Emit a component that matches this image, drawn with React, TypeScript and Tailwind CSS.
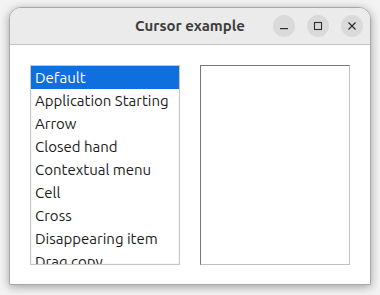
import React from "react";

const items = [
  "Default",
  "Application Starting",
  "Arrow",
  "Closed hand",
  "Contextual menu",
  "Cell",
  "Cross",
  "Disappearing item",
  "Drag copy",
];

function CircleBtn({ children }: { children: React.ReactNode }) {
  return (
    <div className="w-[22px] h-[22px] rounded-full bg-[#dadada] flex items-center justify-center">
      {children}
    </div>
  );
}

export default function App() {
  return (
    <div
      className="w-[380px] h-[295px] bg-[#f3f3f3] pt-[7px] pl-[9px] overflow-hidden"
      style={{ fontFamily: "Ubuntu, 'Noto Sans', sans-serif" }}
    >
      <div className="w-[362px] h-[278px] bg-white rounded-t-[12px] border border-[#a8a8a8] shadow-[0_2px_10px_rgba(0,0,0,0.35)] flex flex-col overflow-hidden">
        <div className="h-[37px] shrink-0 bg-[#ebebeb] border-b border-[#c4c4c4] relative flex items-center">
          <div className="absolute left-0 right-0 top-0 h-full flex items-center justify-center text-[15px] font-bold text-[#3d3d3d]">
            Cursor example
          </div>
          <div className="ml-auto mr-[7px] flex items-center gap-[12px] relative">
            <CircleBtn>
              <svg width="10" height="10" viewBox="0 0 10 10">
                <rect x="1" y="7" width="8" height="1.2" fill="#2e2e2e" />
              </svg>
            </CircleBtn>
            <CircleBtn>
              <svg width="10" height="10" viewBox="0 0 10 10">
                <rect x="1.5" y="1.5" width="7" height="7" fill="none" stroke="#2e2e2e" strokeWidth="1.1" />
              </svg>
            </CircleBtn>
            <CircleBtn>
              <svg width="10" height="10" viewBox="0 0 10 10">
                <path d="M1.5 1.5 L8.5 8.5 M8.5 1.5 L1.5 8.5" stroke="#2e2e2e" strokeWidth="1.2" />
              </svg>
            </CircleBtn>
          </div>
        </div>
        <div className="flex-1 flex gap-[20px] px-[20px] pt-[20px] pb-[19px]">
          <div className="w-[150px] h-[200px] border border-[#c6c6c6] shadow-[inset_0_0_2px_rgba(0,0,0,0.12)] overflow-hidden bg-white">
            {items.map((it, i) => (
              <div
                key={it}
                className={
                  "h-[23px] pl-[4px] flex items-center text-[15px] whitespace-nowrap " +
                  (i === 0 ? "bg-[#0f6fdf] text-white" : "text-[#1b1b1b]")
                }
              >
                <span className="relative top-[1px]">{it}</span>
              </div>
            ))}
          </div>
          <div className="w-[150px] h-[200px] border border-t-[#767676] border-l-[#767676] border-r-[#c0c0c0] border-b-[#c0c0c0] bg-white" />
        </div>
      </div>
    </div>
  );
}
